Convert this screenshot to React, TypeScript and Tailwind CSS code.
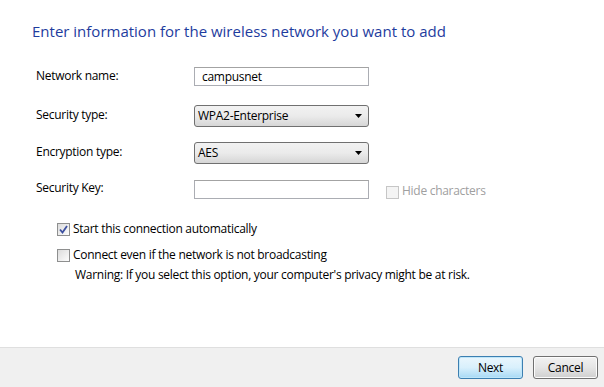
import React from 'react';

const font = { fontFamily: '"Open Sans", "Noto Sans", "Liberation Sans", sans-serif' };

function TextBox({ value }: { value?: string }) {
  return (
    <div className="w-[175px] h-[19px] border border-[#abadb3] border-t-[#a3a3a3] bg-white flex items-center pl-[7px] text-[12px] text-black">
      {value}
    </div>
  );
}

function Combo({ value }: { value: string }) {
  return (
    <div className="w-[175px] h-[22px] rounded-[3px] border border-[#707070] bg-gradient-to-b from-[#f2f2f2] via-[#ebebeb] to-[#d6d6d6] flex items-center justify-between pl-[3px] pr-[6px] text-[12px] text-black">
      <span>{value}</span>
      <svg width="7" height="4" viewBox="0 0 7 4">
        <path d="M0 0 H7 L3.5 4 Z" fill="#000" />
      </svg>
    </div>
  );
}

function CheckBox({ checked, disabled }: { checked?: boolean; disabled?: boolean }) {
  return (
    <div
      className={`w-[13px] h-[13px] border flex items-center justify-center shrink-0 ${
        disabled ? 'border-[#c6c6c6] bg-[#f4f4f4]' : 'border-[#8e8f8f] bg-gradient-to-br from-[#dcdcdc] to-[#fdfdfd]'
      }`}
    >
      {checked && (
        <svg width="9" height="9" viewBox="0 0 9 9">
          <path d="M1 4.5 L3.5 7.5 L8 1" fill="none" stroke="#3d50a0" strokeWidth="1.8" />
        </svg>
      )}
    </div>
  );
}

export default function App() {
  return (
    <div className="w-[604px] h-[387px] bg-white flex flex-col overflow-hidden tracking-[-0.28px]" style={font}>
      <div className="flex-1 flex flex-col">
        <h1 className="pl-[32px] pt-[20px] text-[15px] leading-[22px] tracking-normal text-[#1e3c9e]">
          Enter information for the wireless network you want to add
        </h1>

        <div className="pl-[36px] flex flex-col text-[12px] text-black">
          <div className="mt-[25px] flex items-center">
            <span className="w-[158px] -mt-[2px]">Network name:</span>
            <TextBox value="campusnet" />
          </div>
          <div className="mt-[19px] flex items-center">
            <span className="w-[158px] -mt-[2px]">Security type:</span>
            <Combo value="WPA2-Enterprise" />
          </div>
          <div className="mt-[15px] flex items-center">
            <span className="w-[158px] -mt-[2px]">Encryption type:</span>
            <Combo value="AES" />
          </div>
          <div className="mt-[14px] flex items-center">
            <span className="w-[158px] -mt-[2px]">Security Key:</span>
            <TextBox />
            <div className="ml-[17px] mt-[6px] flex items-center gap-[3px] text-[#a0a0a0]">
              <CheckBox disabled />
              <span className="-mt-[2px]">Hide characters</span>
            </div>
          </div>

          <div className="pl-[21px] flex flex-col">
            <div className="mt-[21px] h-[16px] flex items-center gap-[3px]">
              <CheckBox checked />
              <span>Start this connection automatically</span>
            </div>
            <div className="mt-[10px] h-[16px] flex items-center gap-[3px]">
              <CheckBox />
              <span>Connect even if the network is not broadcasting</span>
            </div>
            <div className="mt-[4px] h-[16px] flex items-center pl-[18px]">
              <span>Warning: If you select this option, your computer's privacy might be at risk.</span>
            </div>
          </div>
        </div>
      </div>

      <div className="h-[40px] border-t border-[#dfdfdf] bg-[#f0f0f0] flex items-start justify-end gap-[10px] pr-[6px] pt-[8px] text-[12px] text-black">
        <button className="w-[65px] h-[23px] rounded-[3px] border border-[#3c7fb1] bg-gradient-to-b from-[#eaf6fd] via-[#d9f0fc] to-[#a7d9f5] shadow-[inset_0_0_0_1px_#bfe6f9] flex items-center justify-center">
          Next
        </button>
        <button className="w-[65px] h-[23px] rounded-[3px] border border-[#707070] bg-gradient-to-b from-[#f2f2f2] via-[#e5e5e5] to-[#cfcfcf] shadow-[inset_0_0_0_1px_#fcfcfc] flex items-center justify-center">
          Cancel
        </button>
      </div>
    </div>
  );
}
